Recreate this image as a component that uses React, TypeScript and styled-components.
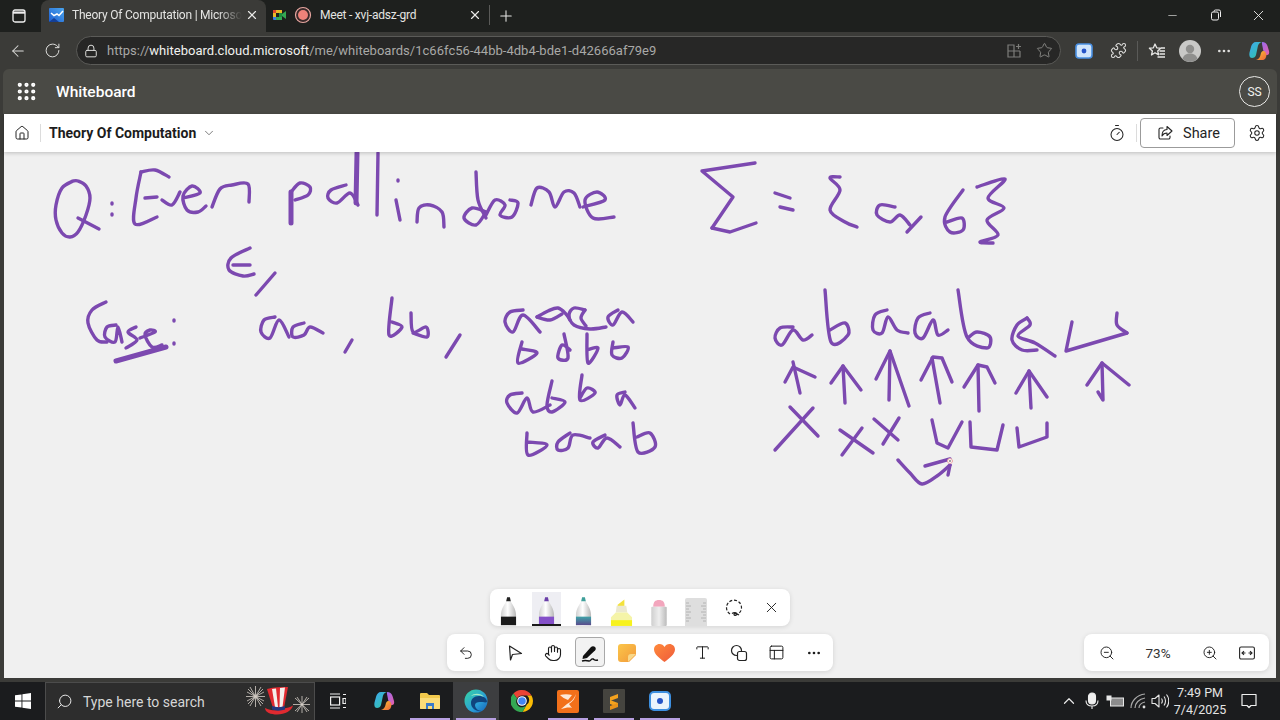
import React from "react";
import styled, { createGlobalStyle } from "styled-components";
import {
  ArrowLeft, RotateCw, Lock, Star, Puzzle, Ellipsis, Grip, House, ChevronDown, Timer, Settings,
  X, Plus, Minus, Undo2, Hand, Type, PanelsTopLeft, ZoomIn, ZoomOut, Search, ChevronUp,
} from "lucide-react";

const UI = `Roboto, "Noto Sans", "Liberation Sans", sans-serif`;

const Global = createGlobalStyle`
  html, body { margin: 0; width: 1280px; height: 720px; overflow: hidden; background: #3a3a37; }
  #root { width: 1280px; height: 720px; }
  * { box-sizing: border-box; }
`;

const Page = styled.div`
  width: 1280px; height: 720px; display: flex; flex-direction: column; font-family: ${UI};
`;

/* ---------- browser tab strip ---------- */
const TabStrip = styled.div`
  height: 32px; flex: none; display: flex; align-items: center; background: #1e201e; color: #e8e8e6;
`;
const Slot = styled.div<{ $w: number; $c?: string }>`
  width: ${(p) => p.$w}px; flex: none; display: flex; align-items: center; justify-content: center;
  color: ${(p) => p.$c || "inherit"};
`;
const ActiveTab = styled.div`
  width: 225px; height: 32px; flex: none; display: flex; align-items: center; padding: 0 4px 2px 8px;
  background: #3b3b38; border-radius: 8px 8px 0 0;
`;
const Tab = styled.div`
  width: 223px; height: 32px; flex: none; display: flex; align-items: center; padding: 0 4px 2px 3px;
`;
const TabTitle = styled.span`
  flex: 1; min-width: 0; margin-left: 3px; font-size: 12px; letter-spacing: -.22px; white-space: nowrap; color: #e4e4e2;
`;
const FadedTitle = styled(TabTitle)`
  margin-left: 8px; mask-image: linear-gradient(90deg, #000 86%, transparent 100%);
`;
const StripSep = styled.div`width: 1px; height: 20px; margin-bottom: 2px; flex: none; background: #5a5a58;`;
const StripEnd = styled.div`display: flex; align-items: center; padding-bottom: 2px; margin-left: auto;`;
const Grow = styled.div`flex: 1;`;

/* ---------- address row ---------- */
const AddressRow = styled.div`
  height: 37px; flex: none; display: flex; align-items: center; background: #3b3b38; color: #dededc;
`;
const Address = styled.div`
  width: 985px; height: 29px; margin-left: 8px; flex: none; display: flex; align-items: center;
  padding: 0 1px 0 7px; background: #272726; border: 1px solid #5b5b58; border-radius: 15px;
`;
const Url = styled.span`
  margin-left: 9px; flex: 1; font-size: 13px; letter-spacing: .02px; color: #a9a9a7; white-space: nowrap;
  b { font-weight: 400; color: #f1f1ef; }
`;
const ToolSep = styled.div`
  width: 4px; flex: none; display: flex; justify-content: center;
  &::after { content: ""; width: 1px; height: 20px; background: #5a5a58; }
`;

/* ---------- web app ---------- */
const WebArea = styled.div`
  flex: 1; min-height: 0; display: flex; flex-direction: column; padding: 0 4px 4px; background: #3b3b38;
`;
const AppHeader = styled.div`
  height: 45px; flex: none; display: flex; align-items: center; margin: 0 -1px; padding: 0 7px 0 0;
  background: #4a4a45; border-radius: 6px 6px 0 0; color: #fff;
`;
const Product = styled.span`font-size: 15.5px; font-weight: 500; margin-left: 7px;`;
const Initials = styled.div`
  width: 31px; height: 31px; border: 1px solid #e8e8e6; border-radius: 50%; display: flex; align-items: center;
  justify-content: center; font-size: 12px; color: #f0f0ee;
`;
const CommandBar = styled.div`
  height: 38px; flex: none; display: flex; align-items: center; background: #fff; color: #242424;
  box-shadow: 0 1px 4px rgba(0,0,0,.22); position: relative; z-index: 2;
`;
const BarSep = styled.div`width: 1px; height: 18px; flex: none; background: #dcdcdc;`;
const BoardTitle = styled.span`font-size: 14px; font-weight: 700; margin-left: 8px; color: #1c1c1c;`;
const ShareButton = styled.div`
  width: 95px; height: 30px; flex: none; display: flex; align-items: center; justify-content: center; gap: 10px;
  margin: 0 3px; padding-left: 2px; border: 1px solid #9b9b9b; border-radius: 4px; font-size: 14.5px; color: #242424;
`;
const Canvas = styled.div`flex: 1; min-height: 0; position: relative; background: #f0f0f0; overflow: hidden;`;
const Ink = styled.svg`position: absolute; inset: 0; width: 1272px; height: 526px; filter: blur(.3px);`;

/* ---------- floating toolbars ---------- */
const Dock = styled.div`
  position: absolute; left: 0; right: 0; bottom: 7px; display: flex; flex-direction: column; align-items: center; gap: 8px;
`;
const Panel = styled.div`
  height: 37px; display: flex; align-items: center; background: #fff; border-radius: 8px; color: #1c1c1c;
  box-shadow: 0 1px 5px rgba(0,0,0,.12);
`;
const ToolRow = styled.div`display: flex; gap: 12px;`;
const PenSlot = styled.div<{ $on?: boolean }>`
  width: 37.5px; height: 37px; flex: none; display: flex; align-items: flex-end; justify-content: center;
  position: relative;
  ${(p) => p.$on && `
    &::before { content: ""; position: absolute; left: 4px; right: 4px; top: 3px; bottom: 0; background: #eeeef3; }
    &::after { content: ""; position: absolute; left: 4px; right: 4px; bottom: 0; height: 2px; background: #1a1a1a; }
  `}
  svg { position: relative; }
`;
const CenterSlot = styled(PenSlot)`align-items: center;`;
const Tool = styled.div<{ $on?: boolean }>`
  width: 37.4px; height: 37px; flex: none; display: flex; align-items: center; justify-content: center;
  position: relative;
  ${(p) => p.$on && `
    &::before { content: ""; position: absolute; left: 4px; right: 4px; top: 3px; bottom: 4px; background: #f2f2f2;
      border: 1px solid #a8a8a8; border-radius: 4px; }
  `}
  svg { position: relative; }
`;
const ZoomPanel = styled(Panel)`position: absolute; right: 7px; bottom: 7px; width: 185px; padding-left: 4px;`;
const ZoomValue = styled.span`width: 66px; flex: none; text-align: center; font-size: 13.5px; color: #333;`;
const ZoomTool = styled(Tool)`width: 37px;`;

/* ---------- taskbar ---------- */
const Taskbar = styled.div`
  height: 38px; flex: none; display: flex; align-items: center; background: #1b1c1e; color: #e8e8e8;
`;
const SearchBox = styled.div`
  width: 270px; height: 38px; flex: none; display: flex; align-items: center; padding: 0 4px 0 10px;
  background: #2d2d2d; border: 1px solid #4c4c4c; border-bottom: 0;
`;
const FlipSearch = styled(Search)`transform: scaleX(-1); flex: none;`;
const SearchText = styled.span`margin-left: 10px; font-size: 14px; color: #d6d6d6; flex: 1; white-space: nowrap;`;
const TaskIcon = styled.div<{ $on?: boolean; $open?: boolean }>`
  width: 46px; height: 38px; flex: none; display: flex; align-items: center; justify-content: center; position: relative;
  background: ${(p) => (p.$on ? "#3d3e40" : "transparent")};
  ${(p) => p.$open && `&::after { content: ""; position: absolute; left: 3px; right: 3px; bottom: 0; height: 2px; background: #b79fe0; }`}
`;
const Clock = styled.div`
  width: 60px; flex: none; text-align: center; font-size: 12.5px; line-height: 17px; color: #e4e4e4;
`;
const Tray = styled.div`display: flex; align-items: center; margin-left: auto; padding-right: 12px;`;

/* ---------- handwriting data: screen coordinates ---------- */
const curves: string[] = [
  "73,181 62,188 56,205 56,220 62,233 70,237 78,232 86,215 90,198 86,186 78,181 73,181", "78,218 99,229",
  "112,203 112,204", "112,214 112,215",
  "141,172 155,170 169,177", "141,172 136,198 135,224 157,217", "145,198 157,197",
  "162,200 172,205 180,192", "183,198 200,193 192,186 183,196 187,210 198,212 206,206",
  "212,207 220,189 232,185 248,184 249,202",
  "291,192 300,183 310,187 308,195 295,200", "346,185 331,190 328,198 337,203 350,193 358,205",
  "396,200 400,220", "398,180 398,181",
  "417,222 419,208 430,205 442,212 444,227",
  "486,212 472,208 464,218 476,225 486,212", "476,172 478,200 486,218",
  "486,215 495,200 505,205 500,215 512,217 518,203 510,200",
  "531,205 537,188 549,192 555,207 564,192 574,193 580,207",
  "583,207 605,200 597,192 585,200 593,218 614,217",
  "250,248 231,258 229,270 243,276 254,274", "233,265 250,265", "275,273 256,295",
  "106,302 92,310 88,323 97,340 107,342", "116,325 107,327 105,337 115,342 118,327 122,342",
  "136,327 128,332 137,340 126,348", "140,338 155,332 150,330 145,335 152,347 162,345",
  "174,320 174,321", "174,343 174,344",
  "275,317 264,320 261,332 270,338 279,320 289,337", "304,323 293,327 293,337 304,335 310,327 323,333",
  "352,340 345,352", "392,298 389,335 402,327 392,322", "411,313 413,332 426,327 427,337 413,333", "460,335 446,357",
  "523,310 510,312 505,322 513,332 523,315 540,332",
  "537,317 548,311 558,308 566,314 570,320", "537,317 550,320 562,314",
  "585,310 574,308 569,315 574,325 590,329 606,327", "585,310 581,318 586,326",
  "618,310 608,317 613,325 622,312 633,322",
  "522,342 518,363 537,353 522,349", "564,334 568,358 558,358 562,345 570,350",
  "587,334 588,363 598,348 587,350", "613,342 612,355 622,358 628,347 613,348",
  "522,393 510,395 507,403 517,413 527,398 533,412 550,405", "552,381 547,405 552,412 565,402 552,398",
  "582,375 580,400 595,393 587,388 580,398", "625,392 617,395 620,405 625,395 635,408",
  "527,433 528,455 547,445 528,442", "570,433 558,442 558,450 568,448 573,435 590,438",
  "605,435 593,442 598,448 607,438 620,447", "633,423 638,452 655,447 650,433 637,437",
  "775,193 790,198", "780,207 793,210", "840,177 830,178 840,190 830,210 845,222 857,227",
  "895,207 880,205 877,215 890,222 900,215 910,225", "921,217 907,232",
  "963,190 945,217 950,232 963,230 962,218 947,222",
  "977,187 1005,179 988,198 1004,208 987,220 998,235 980,242 993,243",
  "793,327 780,328 775,338 782,345 793,330 803,340 812,335",
  "825,290 831,342 848,335 845,323 830,330",
  "887,310 875,315 873,330 882,333 888,317 897,330 908,333",
  "930,313 918,318 915,333 923,338 933,320 938,335 948,330",
  "958,290 967,337 987,348 990,337 977,332 968,338",
  "1027,318 1017,325 1012,340 1022,350 1037,350", "1027,318 1030,325 1018,336 1035,343 1055,356",
  "1127,333 1117,325 1117,313", "898,460 910,473 922,484 937,476 950,465", "925,466 950,459",
];
const lines: string[] = [
  "378,153 377,215",
  "755,163 702,171 733,197 712,228", "712,228 730,232 756,223",
  "1072,322 1066,351 1127,333",
  "793,362 800,393", "785,382 793,367 815,377",
  "831,383 843,366 861,390", "843,366 845,403",
  "876,379 890,351 909,406", "890,351 889,400",
  "921,380 933,357 942,358 952,382", "932,358 940,403",
  "964,387 978,365 987,367 995,383", "978,365 979,411",
  "1016,393 1029,371 1047,397", "1029,371 1031,408",
  "1087,385 1102,363 1129,385", "1102,363 1103,400 1098,392",
  "775,450 813,408", "790,407 818,436", "842,455 862,428", "840,430 873,453", "883,444 899,418", "874,419 898,440",
  "932,420 937,443 948,448 962,422", "970,422 971,447 997,450 1003,425", "1017,428 1019,447 1047,437 1047,423",
  "950,465 948,475",
];
const heavy: string[] = ["291,192 291,223", "357,153 356,203", "116,361 166,347"];

const parse = (s: string) => s.split(" ").map((p) => p.split(",").map(Number));
const curvePath = (s: string) => {
  const p = parse(s);
  let d = `M${p[0][0]} ${p[0][1]}`;
  for (let i = 0; i < p.length - 1; i++) {
    const a = p[i - 1] || p[i], b = p[i], c = p[i + 1], e = p[i + 2] || c;
    d += `C${b[0] + (c[0] - a[0]) / 6} ${b[1] + (c[1] - a[1]) / 6} ${c[0] - (e[0] - b[0]) / 6} ${c[1] - (e[1] - b[1]) / 6} ${c[0]} ${c[1]}`;
  }
  return d;
};

/* ---------- drawn icons ---------- */
const SidebarIcon = () => (
  <svg width="14" height="14" viewBox="0 0 14 14" fill="none" stroke="#f0f0f0" strokeWidth="1.3">
    <rect x="1" y="1" width="12" height="12" rx="2" /><path d="M1 3.6h12" strokeWidth="2.2" />
  </svg>
);
const BoardFav = () => (
  <svg width="15" height="14" viewBox="0 0 15 14">
    <defs><linearGradient id="bf" x1="0" y1="1" x2="1" y2="0"><stop offset="0" stopColor="#1f5fd0" /><stop offset="1" stopColor="#4aa5ee" /></linearGradient></defs>
    <rect width="15" height="14" rx="1" fill="url(#bf)" />
    <path d="M2 5l3 2.500L8 6l2 1.500L14 3" fill="none" stroke="#fff" strokeWidth="1.500" />
    <path d="M0 14l5-4 5 4z" fill="#143f96" />
  </svg>
);
const MeetFav = () => (
  <svg width="16" height="16" viewBox="0 0 16 16">
    <path d="M2 3h9v3H5v4H2z" fill="#e9b928" /><path d="M2 10h3v3H3a1 1 0 01-1-1z" fill="#3c7de0" /><path d="M5 10h6v3H5z" fill="#34a853" />
    <path d="M8 6h3v4H8z" fill="#1e8e3e" /><path d="M11 7l4-3v8l-4-3z" fill="#34a853" /><path d="M2 3h3v3H2z" fill="#e0452f" />
  </svg>
);
const RecordFav = () => (
  <svg width="18" height="18" viewBox="0 0 18 18"><circle cx="9" cy="9" r="7.500" fill="#3a2a2a" stroke="#e7a6a0" strokeWidth="1.200" /><circle cx="9" cy="9" r="5" fill="#ee8279" /></svg>
);
const RestoreIcon = () => (
  <svg width="12" height="12" viewBox="0 0 12 12" fill="none" stroke="#eee" strokeWidth="1"><rect x="1.500" y="3" width="7" height="8" rx="1.500" /><path d="M4 3V2.500A1.500 1.500 0 015.500 1H9a1.500 1.500 0 011.500 1.500V8" /></svg>
);
const SplitIcon = () => (
  <svg width="16" height="16" viewBox="0 0 16 16" fill="none" stroke="#7d7d7a" strokeWidth="1.200"><path d="M8.500 2H2v12h12V8M2 8h12M8 2v12M12.500 1v5M10 3.500h5" /></svg>
);
const ScreenIcon = () => (
  <svg width="18" height="18" viewBox="0 0 18 18"><rect x="1" y="2" width="16" height="14" rx="3" fill="#cfe4fb" stroke="#4a90e2" strokeWidth="1.600" /><circle cx="9" cy="9" r="2.400" fill="#2553c7" /></svg>
);
const FavIcon = () => (
  <svg width="18" height="18" viewBox="0 0 18 18" fill="none" stroke="#e6e6e4" strokeWidth="1.300" strokeLinejoin="round"><path d="M7 2l1.700 3.800 4 .4-3 2.700.9 4L7 10.800 3.500 13l.9-4-3-2.800 4-.4z" /><path d="M11.500 9H17M11.500 12H17M9.500 15H17M13 6h4" /></svg>
);
const Avatar = () => (
  <svg width="22" height="22" viewBox="0 0 22 22"><circle cx="11" cy="11" r="11" fill="#c9c9c7" /><circle cx="11" cy="9" r="4.200" fill="#8f8f8d" /><path d="M3.500 19c1-4 4-5.500 7.500-5.500s6.500 1.500 7.500 5.500a11 11 0 01-15 0z" fill="#8f8f8d" /></svg>
);
const Copilot = ({ id, s = 22 }: { id: string; s?: number }) => (
  <svg width={s} height={s} viewBox="0 0 22 22">
    <defs>
      <linearGradient id={`${id}a`} x1="0" y1="0" x2="1" y2="1"><stop offset="0" stopColor="#3fa8f0" /><stop offset="1" stopColor="#2fc6a0" /></linearGradient>
      <linearGradient id={`${id}b`} x1="0" y1="0" x2="1" y2="1"><stop offset="0" stopColor="#9a6bf0" /><stop offset="1" stopColor="#e85fa8" /></linearGradient>
      <linearGradient id={`${id}c`} x1="0" y1="0" x2="1" y2="1"><stop offset="0" stopColor="#f7c533" /><stop offset="1" stopColor="#f0643c" /></linearGradient>
    </defs>
    <path d="M8 2h6c-3 .5-4 3-4.500 6L8 15c-.5 2-2 3-4 3-2.500 0-3-3-2.500-5.500L3 7c.7-3 2.500-5 5-5z" fill={`url(#${id}a)`} />
    <path d="M14 2c3 0 4.500 1.500 5.500 4l1.500 5c.5 2 0 4-2 4-3 0-3-2-3.800-5L14 4z" fill={`url(#${id}b)`} />
    <path d="M14 20H8c3-.5 4-3 4.500-5 .4-2 1-4 3-4 2 0 2.500 2 3 4-.5 3-1.500 5-4.500 5z" fill={`url(#${id}c)`} />
  </svg>
);
const ShareIcon = () => (
  <svg width="16" height="16" viewBox="0 0 16 16" fill="none" stroke="#242424" strokeWidth="1.100" strokeLinejoin="round" strokeLinecap="round">
    <path d="M6 3H3.500A1.500 1.500 0 002 4.500v8A1.500 1.500 0 003.500 14h8a1.500 1.500 0 001.500-1.500V11" /><path d="M10 1.500L15 6l-5 4.500V8C7.500 8 6 9 5 11c0-4 1.500-6.500 5-6.500z" />
  </svg>
);
const Pen = ({ id, tip, band, band2 }: { id: string; tip: string; band: string; band2?: string }) => (
  <svg width="17" height="31" viewBox="0 0 18 31">
    <defs>
      <linearGradient id={id} x1="0" x2="1" y1="0" y2="0"><stop offset="0" stopColor="#d0d0d0" /><stop offset=".45" stopColor="#fff" /><stop offset="1" stopColor="#b8b8b8" /></linearGradient>
      <linearGradient id={`${id}b`} x1="0" x2="0" y1="0" y2="1"><stop offset="0" stopColor={band} /><stop offset="1" stopColor={band2 || band} /></linearGradient>
    </defs>
    <path d="M6.500 6L7.500 1.500h3l1 4.500z" fill={tip} />
    <path d="M1 31V20C1 14 5 9 6.500 6h5C13 9 17 14 17 20v11z" fill={`url(#${id})`} />
    <rect x="1" y="22" width="16" height="9" fill={`url(#${id}b)`} />
  </svg>
);
const Highlighter = () => (
  <svg width="23" height="27" viewBox="0 0 24 28">
    <path d="M8 6l7-5.500V8H8z" fill="#f4e23a" /><path d="M7 7h10l1 7H6z" fill="#ece9cf" />
    <path d="M6 14h12l5 5v9H1v-9z" fill="#f5f4a8" /><path d="M1 22h22v6H1z" fill="#f7f21e" />
  </svg>
);
const Eraser = () => (
  <svg width="18" height="27" viewBox="0 0 18 28">
    <defs><linearGradient id="er" x1="0" x2="1" y1="0" y2="0"><stop offset="0" stopColor="#cfcfcf" /><stop offset=".5" stopColor="#eee" /><stop offset="1" stopColor="#bbb" /></linearGradient></defs>
    <path d="M3 8C3 3 5 1 9 1s6 2 6 7z" fill="#f3a6bd" /><rect x="1" y="8" width="16" height="20" rx="1" fill="url(#er)" />
  </svg>
);
const Ruler = () => (
  <svg width="24" height="28" viewBox="0 0 24 28" stroke="#a8a8a8" strokeWidth=".8">
    <path d="M1 2a2 2 0 012-2h18a2 2 0 012 2v26H1z" fill="#dedede" stroke="none" />
    <path d="M2 5h3M2 8h5M2 11h3M2 14h5M2 17h3M2 20h5M2 23h3M22 5h-3M22 8h-5M22 11h-3M22 14h-5M22 17h-3M22 20h-5M22 23h-3" />
  </svg>
);
const Lasso = () => (
  <svg width="20" height="20" viewBox="0 0 20 20" fill="none" stroke="#242424" strokeWidth="1.200"><path d="M6 16A7.500 7.500 0 1114 16" strokeDasharray="3 1.800" /><path d="M8 15.500c2-1.500 5-1 5 .5s-3 2-3 .5 3-1 5 .5" /></svg>
);
const Cursor = () => (
  <svg width="18" height="18" viewBox="0 0 18 18" fill="none" stroke="#242424" strokeWidth="1.200" strokeLinejoin="round"><path d="M3.500 2L15.500 9.500 6.500 10.500 4.500 16z" /></svg>
);
const Inking = () => (
  <svg width="20" height="20" viewBox="0 0 20 20"><path d="M3 13L11 4c1-1 3-1 4 0s1 2.500 0 3.500L7 15l-4.500 1z" fill="#111" /><path d="M2 18c3-1 5-.5 7 0s2-3 4-2 1.500 2 5 1" fill="none" stroke="#111" strokeWidth="1.400" /></svg>
);
const Sticky = () => (
  <svg width="18" height="18" viewBox="0 0 18 18">
    <defs><linearGradient id="st" x1="0" y1="0" x2="1" y2="1"><stop offset="0" stopColor="#fbc64a" /><stop offset="1" stopColor="#f2993a" /></linearGradient></defs>
    <path d="M3 0h12a3 3 0 013 3v8l-7 7H3a3 3 0 01-3-3V3a3 3 0 013-3z" fill="url(#st)" /><path d="M18 10l-8 8v-5a3 3 0 013-3z" fill="#f8d88a" />
  </svg>
);
const Heart = () => (
  <svg width="21" height="18" viewBox="0 0 21 18">
    <defs><linearGradient id="hr" x1="0" y1="0" x2="1" y2="1"><stop offset="0" stopColor="#ff8a3c" /><stop offset="1" stopColor="#ee5a3a" /></linearGradient></defs>
    <path d="M10.500 18C6 14.500 0 10.500 0 5.500 0 2.300 2.500 0 5.500 0c2.200 0 4 1 5 3 1-2 2.800-3 5-3C18.500 0 21 2.300 21 5.500c0 5-6 9-10.500 12.500z" fill="url(#hr)" />
  </svg>
);
const Shapes = () => (
  <svg width="18" height="18" viewBox="0 0 18 18" fill="none" stroke="#242424" strokeWidth="1.200"><circle cx="6.500" cy="6.500" r="5" /><rect x="7.500" y="7.500" width="9" height="9" rx="2" fill="#fff" /></svg>
);
const FitIcon = () => (
  <svg width="16" height="14" viewBox="0 0 16 14" fill="none" stroke="#242424" strokeWidth="1.100"><rect x=".6" y="1" width="14.800" height="12" rx="1.500" /><path d="M6.500 7H3M5 5.200L3 7l2 1.800M9.500 7H13M11 5.200L13 7l-2 1.800" /></svg>
);
const WinLogo = () => (
  <svg width="16" height="16" viewBox="0 0 16 16" fill="#fff"><path d="M0 2.300L6.500 1.400V7.500H0zM7.400 1.300L16 0V7.500H7.400zM0 8.400H6.500V14.600L0 13.700zM7.400 8.400H16V16L7.400 14.700z" /></svg>
);
const Festive = () => (
  <svg width="64" height="36" viewBox="0 0 64 36" fill="none">
    <g stroke="#d6cfc8" strokeWidth=".8">
      <path d="M2 5l15 15M17 5L2 20M9.500 2v21M0 12.500h19M4 3l11 19M15 3L4 22M1 8l17 9M18 8L1 17" />
      <path d="M49 14l14 13M63 14L49 27M56 12v17M47 20.500h18M51 13l10 15M61 13L51 28" />
    </g>
    <path d="M21 5c7-2 15-2 21-2l-4 21H27z" fill="#e02a30" />
    <path d="M26 5l3 18h3L30 4.500zM34 4l-.5 19h3L39 3.500z" fill="#f4efec" />
    <path d="M19 24c6 3 14 3 19 .5 3-.5 6-1 9-3-1 5-8 9-16 9-6 0-12-2-12-6.500z" fill="#e02a30" />
    <path d="M26 22c4 1.500 9 1.500 13 0v3.500c-4 1.500-9 1.500-13 0z" fill="#24367e" />
  </svg>
);
const TaskView = () => (
  <svg width="16" height="16" viewBox="0 0 16 16" fill="none" stroke="#f0f0f0" strokeWidth="1.200"><path d="M0 1h10M0 15h10" /><rect x=".6" y="4" width="9" height="8" /><path d="M13 1.500h3M13 5.500h3v5h-3zM13 14.500h3" /></svg>
);
const Explorer = () => (
  <svg width="20" height="20" viewBox="0 0 20 20"><path d="M0 3a1 1 0 011-1h6l2 2h10a1 1 0 011 1v12a1 1 0 01-1 1H1a1 1 0 01-1-1z" fill="#f2c94c" /><path d="M0 7h20v10a1 1 0 01-1 1H1a1 1 0 01-1-1z" fill="#fbdc78" /><path d="M6 12h8v6h-2v-3H8v3H6z" fill="#3a7bc8" /></svg>
);
const EdgeLogo = () => (
  <svg width="24" height="24" viewBox="0 0 24 24">
    <defs><linearGradient id="ed" x1="0" y1="0" x2="1" y2="1"><stop offset="0" stopColor="#37d6a0" /><stop offset=".6" stopColor="#2a9fd8" /><stop offset="1" stopColor="#1560b8" /></linearGradient></defs>
    <circle cx="12" cy="12" r="11.500" fill="url(#ed)" /><path d="M23 13c0-4-4-6-8-6-5 0-8 3-8 7 0 5 5 9 11 8-4 0-7-3-7-6 0-2 2-3 5-3 4 0 5 1 7 0z" fill="#10447e" /><path d="M7 7c3-3 10-3 13 1-3-2-9-3-13-1z" fill="#a6ecc4" />
  </svg>
);
const ChromeLogo = () => (
  <svg width="22" height="22" viewBox="0 0 22 22">
    <path d="M11 0a11 11 0 019.500 5.500H11a5.500 5.500 0 00-5 3L2.500 3.500A11 11 0 0111 0z" fill="#ea4335" />
    <path d="M20.500 5.500A11 11 0 0111.500 22l4.300-7.500a5.500 5.500 0 00.2-9z" fill="#fbbc05" />
    <path d="M2.500 3.500A11 11 0 0011.500 22l4.300-7.500a5.500 5.500 0 01-9.800-6z" fill="#34a853" />
    <circle cx="11" cy="11" r="4.800" fill="#fff" /><circle cx="11" cy="11" r="3.800" fill="#4285f4" />
  </svg>
);
const OrangeApp = () => (
  <svg width="22" height="23" viewBox="0 0 22 23">
    <rect width="22" height="23" rx="2" fill="#f2701a" />
    <path d="M3 5c4-1 8-1 12 0l-4 5C8 9 5 7 3 5zM19 4c-2 5-5 8-9 10l-6 5c4-1 8-2 11-1l-3-4c3-2 6-5 7-10z" fill="#fde9d8" />
  </svg>
);
const SublimeApp = () => (
  <svg width="22" height="24" viewBox="0 0 22 24"><rect width="22" height="24" rx="1" fill="#45443f" /><path d="M15 5v4L7 12V8zM7 11l8 3v4L7 15z" fill="#f4a21e" /><path d="M15 14v4l-8 3v-4z" fill="#e8921a" /></svg>
);
const CaptureApp = () => (
  <svg width="22" height="20" viewBox="0 0 22 20"><rect x="1" y="1" width="20" height="18" rx="4" fill="#eaf3fc" stroke="#3d8fe0" strokeWidth="2" /><circle cx="11" cy="10" r="3" fill="#2553c7" /></svg>
);
const MicIcon = () => (
  <svg width="14" height="18" viewBox="0 0 14 18" fill="none" stroke="#eee" strokeWidth="1.100"><rect x="3.500" y="1" width="7" height="11" rx="3.500" fill="#eee" /><path d="M1 8.500c0 4 2.500 5.500 6 5.500s6-1.500 6-5.500M7 14v3" /></svg>
);
const BatteryIcon = () => (
  <svg width="18" height="12" viewBox="0 0 18 12" fill="none" stroke="#e8e8e8" strokeWidth="1"><rect x="4.500" y="3" width="13" height="8" fill="#e8e8e8" fillOpacity=".55" /><rect x="1" y="1" width="4" height="4" fill="#e8e8e8" /></svg>
);
const WifiIcon = () => (
  <svg width="16" height="16" viewBox="0 0 16 16" fill="none" stroke="#a9a9a9" strokeWidth="1.200"><path d="M1 15C1 8 7 2 15 1M5 15c0-5 4-9 10-10M9 15c0-3 2-5 6-6" /><circle cx="14" cy="14" r="1.400" fill="#ddd" stroke="none" /></svg>
);
const VolumeIcon = () => (
  <svg width="18" height="16" viewBox="0 0 18 16" fill="none" stroke="#e6e6e6" strokeWidth="1.100" strokeLinejoin="round"><path d="M1 5.500h3L8 2v12l-4-3.500H1z" /><path d="M10.500 5.500c1 1.500 1 3.500 0 5M13 3.500c2 2.500 2 6.500 0 9M15.500 1.500c3 3.500 3 9.500 0 13" /></svg>
);
const Notify = () => (
  <svg width="16" height="16" viewBox="0 0 16 16" fill="none" stroke="#f0f0f0" strokeWidth="1.200" strokeLinejoin="round"><path d="M1 1.500h14v11H10l-2 2-2-2H1z" /></svg>
);

export default function App() {
  return (
    <Page>
      <Global />
      <TabStrip>
        <Slot $w={37}><SidebarIcon /></Slot>
        <Slot $w={4} />
        <ActiveTab>
          <BoardFav />
          <FadedTitle>Theory Of Computation | Microso</FadedTitle>
          <Slot $w={20}><X size={14} /></Slot>
        </ActiveTab>
        <Tab>
          <Slot $w={20}><MeetFav /></Slot>
          <Slot $w={28}><RecordFav /></Slot>
          <TabTitle>Meet - xvj-adsz-grd</TabTitle>
          <Slot $w={20}><X size={14} /></Slot>
        </Tab>
        <StripSep />
        <Slot $w={32}><Plus size={18} strokeWidth={1.4} /></Slot>
        <StripEnd>
          <Slot $w={43}><Minus size={13} strokeWidth={1.2} /></Slot>
          <Slot $w={43}><RestoreIcon /></Slot>
          <Slot $w={43}><X size={17} strokeWidth={1.3} /></Slot>
        </StripEnd>
      </TabStrip>
      <AddressRow>
        <Slot $w={36}><ArrowLeft size={18} strokeWidth={1.4} /></Slot>
        <Slot $w={32}><RotateCw size={17} strokeWidth={1.4} /></Slot>
        <Address>
          <Lock size={14} strokeWidth={1.7} />
          <Url>https://<b>whiteboard.cloud.microsoft</b>/me/whiteboards/1c66fc56-44bb-4db4-bde1-d42666af79e9</Url>
          <Slot $w={30}><SplitIcon /></Slot>
          <Slot $w={30} $c="#8a8a87"><Star size={17} strokeWidth={1.3} /></Slot>
        </Address>
        <Slot $w={6} />
        <Slot $w={34}><ScreenIcon /></Slot>
        <Slot $w={34}><Puzzle size={17} strokeWidth={1.5} /></Slot>
        <ToolSep />
        <Slot $w={36}><FavIcon /></Slot>
        <Slot $w={30}><Avatar /></Slot>
        <Slot $w={38}><Ellipsis size={16} /></Slot>
        <Slot $w={32}><Copilot id="cpt" /></Slot>
      </AddressRow>
      <WebArea>
        <AppHeader>
          <Slot $w={46}><Grip size={23} strokeWidth={2.4} /></Slot>
          <Product>Whiteboard</Product>
          <Grow />
          <Initials>SS</Initials>
        </AppHeader>
        <CommandBar>
          <Slot $w={36}><House size={16} strokeWidth={1.5} /></Slot>
          <BarSep />
          <BoardTitle>Theory Of Computation</BoardTitle>
          <Slot $w={26} $c="#555"><ChevronDown size={14} strokeWidth={1.3} /></Slot>
          <Grow />
          <Slot $w={38}><Timer size={18} strokeWidth={1.4} /></Slot>
          <BarSep />
          <ShareButton><ShareIcon />Share</ShareButton>
          <Slot $w={38}><Settings size={18} strokeWidth={1.4} /></Slot>
        </CommandBar>
        <Canvas>
          <Ink viewBox="4 152 1272 526" fill="none" stroke="#7c49b0" strokeWidth="3.400" strokeLinecap="round" strokeLinejoin="round">
            {curves.map((s) => <path key={s} d={curvePath(s)} />)}
            {lines.map((s) => <polyline key={s} points={s} />)}
            <g strokeWidth="5">{heavy.map((s) => <polyline key={s} points={s} />)}</g>
            <circle cx="950" cy="461" r="2.500" fill="#fff" stroke="#e8a6a6" strokeWidth="1" />
            <circle cx="950" cy="461" r=".8" fill="#333" stroke="none" />
          </Ink>
          <Dock>
            <Panel>
              <PenSlot><Pen id="p1" tip="#222222" band="#1c1c1c" /></PenSlot>
              <PenSlot $on><Pen id="p2" tip="#6a3fa8" band="#8450c8" /></PenSlot>
              <PenSlot><Pen id="p3" tip="#3f9f9a" band="#3fa3a8" band2="#5a4a8c" /></PenSlot>
              <PenSlot><Highlighter /></PenSlot>
              <PenSlot><Eraser /></PenSlot>
              <PenSlot><Ruler /></PenSlot>
              <CenterSlot><Lasso /></CenterSlot>
              <CenterSlot><X size={17} strokeWidth={1.3} /></CenterSlot>
            </Panel>
            <ToolRow>
              <Panel><Tool><Undo2 size={16} strokeWidth={1.4} /></Tool></Panel>
              <Panel>
                <Tool><Cursor /></Tool>
                <Tool><Hand size={18} strokeWidth={1.5} /></Tool>
                <Tool $on><Inking /></Tool>
                <Tool><Sticky /></Tool>
                <Tool><Heart /></Tool>
                <Tool><Type size={17} strokeWidth={1.4} /></Tool>
                <Tool><Shapes /></Tool>
                <Tool><PanelsTopLeft size={17} strokeWidth={1.4} /></Tool>
                <Tool><Ellipsis size={16} /></Tool>
              </Panel>
            </ToolRow>
          </Dock>
          <ZoomPanel>
            <ZoomTool><ZoomOut size={16} strokeWidth={1.4} /></ZoomTool>
            <ZoomValue>73%</ZoomValue>
            <ZoomTool><ZoomIn size={16} strokeWidth={1.4} /></ZoomTool>
            <ZoomTool><FitIcon /></ZoomTool>
          </ZoomPanel>
        </Canvas>
      </WebArea>
      <Taskbar>
        <Slot $w={45}><WinLogo /></Slot>
        <SearchBox>
          <FlipSearch size={17} strokeWidth={1.4} />
          <SearchText>Type here to search</SearchText>
          <Festive />
        </SearchBox>
        <TaskIcon><TaskView /></TaskIcon>
        <TaskIcon><Copilot id="cpb" /></TaskIcon>
        <TaskIcon $open><Explorer /></TaskIcon>
        <TaskIcon $on $open><EdgeLogo /></TaskIcon>
        <TaskIcon><ChromeLogo /></TaskIcon>
        <TaskIcon $open><OrangeApp /></TaskIcon>
        <TaskIcon $open><SublimeApp /></TaskIcon>
        <TaskIcon $open><CaptureApp /></TaskIcon>
        <Tray>
          <Slot $w={23}><ChevronUp size={18} strokeWidth={1.6} /></Slot>
          <Slot $w={23}><MicIcon /></Slot>
          <Slot $w={23}><BatteryIcon /></Slot>
          <Slot $w={23}><WifiIcon /></Slot>
          <Slot $w={21}><VolumeIcon /></Slot>
          <Clock>7:49 PM<br />7/4/2025</Clock>
          <Slot $w={38}><Notify /></Slot>
        </Tray>
      </Taskbar>
    </Page>
  );
}
